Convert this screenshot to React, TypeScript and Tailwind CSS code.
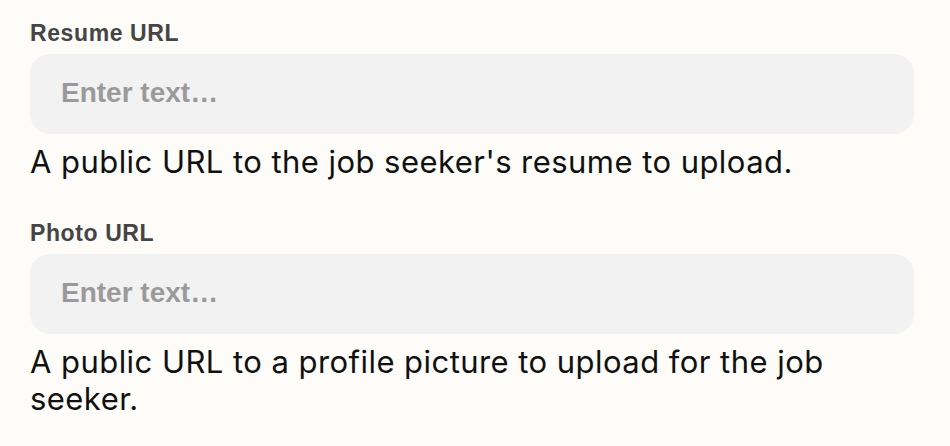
const fields = [
  { id: "resume", label: "Resume URL", help: "A public URL to the job seeker's resume to upload." },
  { id: "photo", label: "Photo URL", help: "A public URL to a profile picture to upload for the job seeker." },
];

export default function App() {
  return (
    <div className="min-h-[446px] w-[950px] bg-[#fdfcf9] pt-[22px] pl-[30px]">
      <div className="flex w-[884px] flex-col gap-[42px]">
        {fields.map((field) => (
          <div key={field.id} className="flex flex-col">
            <label
              className="block font-['Liberation_Sans',Arial,sans-serif] text-[23px] leading-[23px] font-bold tracking-[0.6px] text-[#454545]"
              htmlFor={field.id}
            >
              {field.label}
            </label>
            <input
              id={field.id}
              type="text"
              placeholder="Enter text…"
              className="mt-[9px] h-[80px] w-full rounded-[20px] bg-[#f2f2f3] px-[31px] pb-[2px] font-['Liberation_Sans',Arial,sans-serif] text-[28px] font-bold text-[#222] outline-none placeholder:text-[#9a9a9a]"
            />
            <p className="mt-[9px] font-['Inter','Noto_Sans',sans-serif] text-[31px] leading-[37px] tracking-[0.45px] text-[#111]">
              {field.help}
            </p>
          </div>
        ))}
      </div>
    </div>
  );
}
